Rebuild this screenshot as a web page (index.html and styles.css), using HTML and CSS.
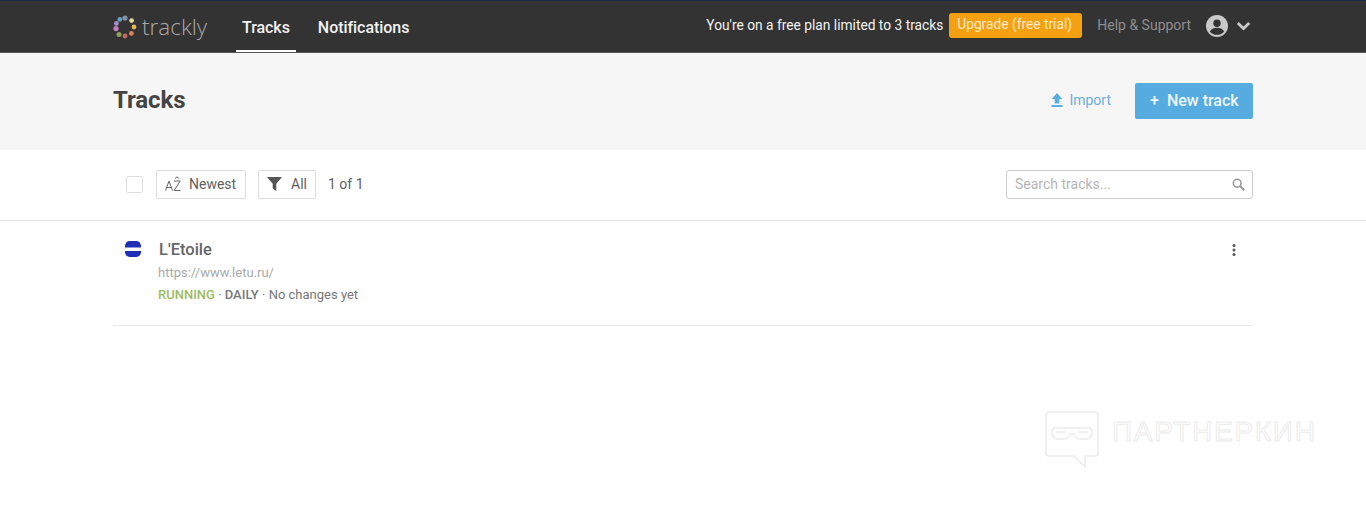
FILE: index.html
```html
<!DOCTYPE html>
<html lang="en">
<head>
    <meta charset="UTF-8">
    <meta name="viewport" content="width=device-width, initial-scale=1.0">
    <title>Tracks - trackly</title>
    <link rel="stylesheet" href="styles.css">
</head>
<body>
    <header class="topbar">
        <div class="wrap topbar-inner">
            <a class="logo">
                <svg class="logo-mark" width="24" height="24" viewBox="0 0 24 24">
                    <circle cx="12" cy="3" r="2.6" fill="#7d93a8"/>
                    <circle cx="18.6" cy="5.6" r="2.4" fill="#e3d9a0"/>
                    <circle cx="21" cy="12" r="2.4" fill="#e5b659"/>
                    <circle cx="18.4" cy="18.4" r="2.4" fill="#d9835a"/>
                    <circle cx="12" cy="21" r="2.4" fill="#c9695f"/>
                    <circle cx="6" cy="19.6" r="2.5" fill="#8fa35f"/>
                    <circle cx="3" cy="13.6" r="2.6" fill="#c77fc4"/>
                    <circle cx="3.4" cy="8.4" r="2.4" fill="#a78fc8"/>
                    <circle cx="6.8" cy="4.4" r="2.4" fill="#6d9fc0"/>
                </svg>
                <span>trackly</span>
            </a>
            <nav class="mainnav">
                <a class="active">Tracks</a>
                <a>Notifications</a>
            </nav>
            <div class="plan">
                <span>You're on a free plan limited to 3 tracks</span>
                <a class="upgrade">Upgrade (free trial)</a>
            </div>
            <a class="help">Help &amp; Support</a>
            <div class="account">
                <svg width="22" height="22" viewBox="0 0 22 22">
                    <circle cx="11" cy="11" r="11" fill="#c9c9c9"/>
                    <circle cx="11" cy="8.2" r="3.7" fill="#333"/>
                    <path d="M3.8 16.4c1.6-2.6 4.4-3.6 7.2-3.6s5.6 1 7.2 3.6a9.2 9.2 0 0 1-14.4 0z" fill="#333"/>
                </svg>
                <svg width="15" height="10" viewBox="0 0 15 10">
                    <path d="M1.8 2l5.7 5.6L13.2 2" fill="none" stroke="#c9c9c9" stroke-width="2.8"/>
                </svg>
            </div>
        </div>
    </header>

    <section class="pagehead">
        <div class="wrap pagehead-inner">
            <h1>Tracks</h1>
            <a class="import">
                <svg width="12" height="14" viewBox="0 0 12 14">
                    <path d="M6 0l5.5 6H8.300v4.500H3.700V6H.5zM.5 12h11v2H.5z" fill="#5aaee0"/>
                </svg>
                Import
            </a>
            <a class="newtrack"><span class="plus">+</span>New track</a>
        </div>
    </section>

    <section class="toolbar">
        <div class="wrap toolbar-inner">
            <span class="check"></span>
            <button class="tool sort">
                <svg width="17" height="16" viewBox="0 0 17 16">
                    <path d="M.5 14.5L4 5l3.500 9.500M1.700 11.500h4.600M9 5h6.200l-6 9.500h6.300M10 2.500L12 .8l2 1.700" fill="none" stroke="#666" stroke-width="1"/>
                </svg>
                Newest
            </button>
            <button class="tool filter">
                <svg width="15" height="14" viewBox="0 0 15 14">
                    <path d="M0 0h15L9.300 6.800V14L5.700 11.500V6.800z" fill="#555"/>
                </svg>
                All
            </button>
            <span class="count">1 of 1</span>
            <label class="search">
                <input type="text" placeholder="Search tracks...">
                <svg width="13" height="13" viewBox="0 0 13 13">
                    <circle cx="5.2" cy="5.2" r="3.9" fill="none" stroke="#999" stroke-width="1.6"/>
                    <path d="M8 8l4.300 4.300" stroke="#999" stroke-width="2"/>
                </svg>
            </label>
        </div>
    </section>

    <main class="wrap">
        <article class="track">
            <svg class="favicon" width="16" height="16" viewBox="0 0 17 17">
                <path d="M0 7V5a5 5 0 0 1 5-5h7a5 5 0 0 1 5 5v2z" fill="#1f2fb5"/>
                <path d="M0 10.500h17V12a5 5 0 0 1-5 5H5a5 5 0 0 1-5-5z" fill="#1f2fb5"/>
            </svg>
            <div class="track-body">
                <h2>L'Etoile</h2>
                <p class="url">https://www.letu.ru/</p>
                <p class="meta"><span class="running">RUNNING</span> · <span class="daily">DAILY</span> · No changes yet</p>
            </div>
            <svg class="more" width="4" height="12" viewBox="0 0 4 12">
                <circle cx="2" cy="1.5" r="1.5" fill="#555"/>
                <circle cx="2" cy="6" r="1.5" fill="#555"/>
                <circle cx="2" cy="10.5" r="1.5" fill="#555"/>
            </svg>
        </article>
    </main>

    <div class="watermark">
        <svg width="54" height="58" viewBox="0 0 54 58">
            <path d="M4 1h46a3 3 0 0 1 3 3v38a3 3 0 0 1-3 3H40v11l-11-11H4a3 3 0 0 1-3-3V4a3 3 0 0 1 3-3z" fill="none" stroke="#ececec" stroke-width="1.5"/>
            <path d="M10 17h34a3 3 0 0 1 3 3v2a6 6 0 0 1-6 6h-6a6 6 0 0 1-6-5h-4a6 6 0 0 1-6 5h-6a6 6 0 0 1-6-6v-2a3 3 0 0 1 3-3zM11 21h10M33 21h10" fill="none" stroke="#ececec" stroke-width="1.5"/>
        </svg>
        <span>ПАРТНЕРКИН</span>
    </div>
</body>
</html>
```

FILE: styles.css
```css
*{
    margin: 0;
    padding: 0;
    box-sizing: border-box;
}
body
{
    background-color: #fff;
    font-family: Roboto, "Liberation Sans", sans-serif;
    color: #5f5f5f;
    font-size: 14px;
    overflow: hidden;
}
a
{
    text-decoration: none;
}
.wrap
{
    width: 1140px;
    margin-left: 113px;
}
.topbar
{
    height: 53px;
    background-color: #333;
    border-top: 1px solid #1e2a44;
    border-bottom: 1px solid #555;
}
.topbar-inner
{
    display: flex;
    align-items: center;
    height: 51px;
}
.logo
{
    display: flex;
    align-items: center;
    width: 123px;
    color: #a9a9a9;
    font-size: 22.5px;
    font-weight: 300;
    gap: 5px;
    font-family: "Open Sans", sans-serif;
}
.mainnav
{
    display: flex;
    height: 51px;
}
.mainnav a
{
    display: flex;
    align-items: center;
    justify-content: center;
    padding: 4px 6px 0;
    margin-right: 16px;
    color: #f2f2f2;
    font-size: 16px;
    font-weight: 500;
    letter-spacing: -0.05px;
    border-bottom: 2px solid transparent;
}
.mainnav a.active
{
    border-bottom-color: #fff;
}
.plan
{
    display: flex;
    align-items: center;
    margin-left: auto;
    color: #f2f2f2;
    font-size: 13.75px;
    gap: 6px;
    margin-top: -3px;
}
.plan span
{
    margin-top: -1px;
}
.upgrade
{
    width: 133px;
    background-color: #f5a011;
    color: #fde9c6;
    padding: 4px 0 5px 8px;
    border-radius: 3px;
    height: 25px;
    line-height: 15px;
}
.help
{
    color: #8e8e8e;
    margin-left: 15px;
    margin-top: -3px;
}
.account
{
    display: flex;
    align-items: center;
    gap: 8px;
    margin-left: 15px;
    margin-right: 2px;
    margin-top: -2px;
}
.pagehead
{
    height: 97px;
    background-color: #f6f6f6;
}
.pagehead-inner
{
    display: flex;
    align-items: center;
    height: 94px;
}
.pagehead h1
{
    font-size: 24px;
    font-weight: 700;
    color: #444;
    letter-spacing: -0.1px;
    margin-right: auto;
}
.import
{
    display: flex;
    align-items: center;
    gap: 6px;
    color: #6cb0dc;
    margin-right: 24px;
}
.newtrack
{
    display: flex;
    align-items: center;
    height: 36px;
    width: 118px;
    padding-left: 15px;
    margin-top: 1px;
    background-color: #56ace0;
    color: #eef7fc;
    font-size: 16px;
    font-weight: 500;
    border-radius: 2px;
}
.plus
{
    margin-right: 8px;
}
.toolbar
{
    height: 71px;
    border-bottom: 1px solid #e6e6e6;
}
.toolbar-inner
{
    display: flex;
    align-items: center;
    height: 68px;
}
.check
{
    width: 17px;
    height: 17px;
    margin-left: 13px;
    margin-right: 13px;
    border: 1px solid #ddd;
    border-radius: 2px;
}
.tool
{
    display: flex;
    align-items: center;
    height: 29px;
    padding-bottom: 1px;
    background-color: #fff;
    border: 1px solid #ddd;
    border-radius: 2px;
    font-family: inherit;
    font-size: 14px;
    color: #5f5f5f;
}
.sort
{
    width: 90px;
    padding-left: 8px;
    gap: 7px;
    margin-right: 12px;
}
.filter
{
    width: 58px;
    padding-left: 8px;
    gap: 9px;
    margin-right: 12px;
}
.count
{
    margin-top: -1px;
}
.search
{
    display: flex;
    align-items: center;
    width: 247px;
    height: 29px;
    margin-left: auto;
    padding: 0 7px 0 8px;
    border: 1px solid #ccc;
    border-radius: 3px;
}
.search input
{
    flex: 1;
    min-width: 0;
    border: 0;
    outline: 0;
    font-family: inherit;
    font-size: 14px;
}
.search input::placeholder
{
    color: #b5b5b5;
}
.track
{
    display: flex;
    height: 105px;
    padding-top: 20px;
    border-bottom: 1px solid #e6e6e6;
}
.favicon
{
    margin-left: 12px;
    margin-right: 17px;
    flex-shrink: 0;
}
.track-body
{
    flex: 1;
}
.track h2
{
    padding-left: 1px;
    font-size: 16.5px;
    font-weight: 500;
    color: #666;
    line-height: 18px;
}
.url
{
    margin-top: 5px;
    font-size: 13px;
    line-height: 18px;
    color: #aaa;
}
.meta
{
    margin-top: 4px;
    font-size: 13px;
    line-height: 18px;
    color: #777;
}
.running
{
    color: #9dbb63;
    font-weight: 500;
}
.daily
{
    font-weight: 500;
}
.more
{
    margin-top: 3px;
    margin-right: 17px;
}
.watermark
{
    position: absolute;
    left: 1045px;
    top: 411px;
    display: flex;
    align-items: flex-start;
    gap: 13px;
}
.watermark span
{
    margin-top: 4px;
    font-family: "Liberation Sans", sans-serif;
    font-size: 28px;
    line-height: 34px;
    letter-spacing: 1.7px;
    color: #fff;
    -webkit-text-stroke: 1px #ececec;
}
```
